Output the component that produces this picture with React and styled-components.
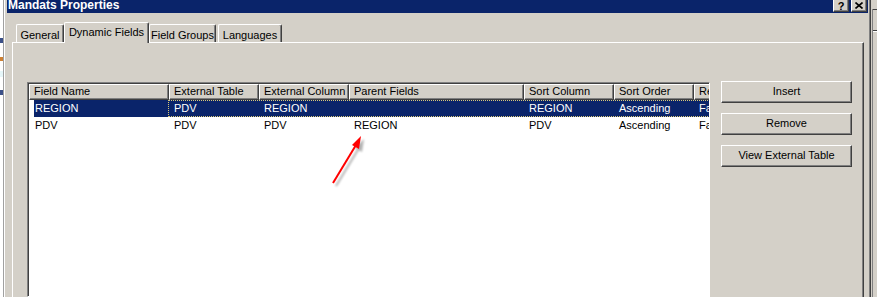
import React from 'react'
import styled, { createGlobalStyle } from 'styled-components'

const colors = {
  face: '#d4d0c8',
  shadow: '#808080',
  dark: '#404040',
  navy: '#0a246a',
  white: '#ffffff',
  focus: '#d8c878',
}

const GlobalStyle = createGlobalStyle`
  html, body {
    margin: 0;
    padding: 0;
    background: #fff;
  }
  body {
    font-family: "Liberation Sans", Arial, sans-serif;
    font-size: 11px;
    color: #000;
  }
`

const Screen = styled.div`
  position: relative;
  display: flex;
  width: 877px;
  height: 297px;
  overflow: hidden;
  background: #fff;
`

const BackWindow = styled.div`
  display: flex;
  flex-direction: column;
  width: 3px;
  border-right: 1px solid #a0a0a0;
  background: #fff;
  overflow: hidden;
`

const Fragment = styled.div`
  height: ${({ h }) => h}px;
  margin-top: ${({ top }) => top}px;
  background: ${({ color }) => color};
  opacity: 0.8;
`

const Dialog = styled.div`
  display: flex;
  flex-direction: column;
  width: 861px;
  padding: 0 2px 0 2px;
  background: ${colors.face};
  border-left: 1px solid ${colors.white};
  border-right: 1px solid ${colors.dark};
  box-shadow: inset -1px 0 ${colors.shadow};
`

const TitleBar = styled.div`
  display: flex;
  justify-content: space-between;
  align-items: flex-start;
  height: 13px;
  padding-left: 1px;
  background: ${colors.navy};
  color: ${colors.white};
`

const Title = styled.div`
  font-weight: bold;
  font-size: 12px;
  line-height: 10px;
`

const CaptionButtons = styled.div`
  display: flex;
  gap: 2px;
  margin-right: 1px;
`

const CaptionButton = styled.div`
  display: flex;
  align-items: center;
  justify-content: center;
  width: 16px;
  height: 12px;
  box-sizing: border-box;
  background: ${colors.face};
  border-left: 1px solid ${colors.white};
  border-right: 1px solid ${colors.dark};
  border-bottom: 1px solid ${colors.dark};
  box-shadow: inset -1px -1px ${colors.shadow};
  color: #000;
  font-weight: bold;
  font-size: 11px;
  line-height: 10px;
`

const Body = styled.div`
  display: flex;
  flex-direction: column;
  flex: 1;
  padding: 9px 4px 0 5px;
`

const TabRow = styled.div`
  position: relative;
  z-index: 1;
  display: flex;
  align-items: flex-end;
  height: 20px;
  padding-left: 2px;
`

const Tab = styled.div`
  width: ${({ w }) => w}px;
  height: ${({ active }) => (active ? 21 : 18)}px;
  margin-left: ${({ gap }) => gap || 0}px;
  margin-bottom: ${({ active }) => (active ? -1 : 0)}px;
  box-sizing: border-box;
  padding-top: ${({ active }) => (active ? 2 : 3)}px;
  background: ${colors.face};
  border-top: 1px solid ${colors.white};
  border-left: 1px solid ${colors.white};
  border-right: 1px solid ${colors.dark};
  border-radius: 2px 2px 0 0;
  box-shadow: inset -1px 0 ${colors.shadow};
  text-align: center;
  line-height: 15px;
  white-space: nowrap;
`

const Panel = styled.div`
  display: flex;
  flex: 1;
  padding: 38px 0 0 14px;
  background: ${colors.face};
  border-top: 1px solid ${colors.white};
  border-left: 1px solid ${colors.white};
  border-right: 1px solid ${colors.dark};
  box-shadow: inset -1px 0 ${colors.shadow};
`

const ListView = styled.div`
  width: 683px;
  box-sizing: border-box;
  margin-top: 1px;
  padding: 1px 0 0 1px;
  background: #fff;
  border: 1px solid;
  border-color: ${colors.shadow} ${colors.white} ${colors.white} ${colors.shadow};
  box-shadow: inset 1px 1px ${colors.dark};
  overflow: hidden;
`

const HeaderRow = styled.div`
  display: flex;
  height: 16px;
`

const HeaderCell = styled.div`
  flex: none;
  width: ${({ w }) => w}px;
  box-sizing: border-box;
  padding-left: 4px;
  background: ${colors.face};
  border-top: 1px solid ${colors.white};
  border-left: 1px solid ${colors.white};
  border-right: 1px solid ${colors.dark};
  border-bottom: 1px solid ${colors.dark};
  box-shadow: inset -1px -1px ${colors.shadow};
  line-height: 13px;
  white-space: nowrap;
  overflow: hidden;
`

const Row = styled.div`
  display: flex;
  height: 17px;
  color: ${({ selected }) => (selected ? colors.white : '#000')};
`

const FirstCell = styled.div`
  flex: none;
  width: 139px;
  box-sizing: border-box;
  padding-left: 5px;
  display: flex;
`

const Label = styled.div`
  flex: 1;
  padding-left: 1px;
  background: ${({ selected }) => (selected ? colors.navy : 'transparent')};
  line-height: 17px;
`

const FocusGroup = styled.div`
  display: flex;
  flex: none;
  box-sizing: border-box;
  height: 17px;
  background: ${({ selected }) => (selected ? colors.navy : 'transparent')};
  border: 1px dotted ${({ selected }) => (selected ? colors.focus : 'transparent')};
  border-right: none;
`

const Cell = styled.div`
  flex: none;
  width: ${({ w }) => w}px;
  box-sizing: border-box;
  padding-left: 5px;
  line-height: 15px;
  white-space: nowrap;
  overflow: hidden;
`

const ButtonColumn = styled.div`
  display: flex;
  flex-direction: column;
  gap: 10px;
  padding-left: 11px;
`

const PushButton = styled.div`
  width: 131px;
  height: 22px;
  box-sizing: border-box;
  background: ${colors.face};
  border-top: 1px solid ${colors.white};
  border-left: 1px solid ${colors.white};
  border-right: 1px solid ${colors.dark};
  border-bottom: 1px solid ${colors.dark};
  box-shadow: inset -1px -1px ${colors.shadow};
  text-align: center;
  line-height: 18px;
`

const RightWindow = styled.div`
  flex: 1;
  padding-left: 1px;
  background: ${colors.face};
`

const RightEdge = styled.div`
  height: 100%;
  border-left: 1px solid ${colors.shadow};
`

const EdgeLine = styled.div`
  margin-top: ${({ top }) => top}px;
  border-top: 1px solid ${colors.dark};
  border-bottom: 1px solid ${({ light }) => (light ? colors.white : 'transparent')};
`

const Annotation = styled.svg`
  position: absolute;
  left: 0;
  top: 0;
  pointer-events: none;
`

const headers = [
  ['Field Name', 140],
  ['External Table', 90],
  ['External Column', 90],
  ['Parent Fields', 175],
  ['Sort Column', 90],
  ['Sort Order', 80],
  ['Required', 100],
]

const rows = [
  { name: 'REGION', cells: ['PDV', 'REGION', '', 'REGION', 'Ascending', 'False'], selected: true },
  { name: 'PDV', cells: ['PDV', 'PDV', 'REGION', 'PDV', 'Ascending', 'False'] },
]

const cellWidths = [90, 90, 175, 90, 80, 100]

const CloseGlyph = () => (
  <svg width="8" height="7" viewBox="0 0 8 7">
    <path d="M0.5 0.5 L7.5 6.5 M7.5 0.5 L0.5 6.5" stroke="#000" strokeWidth="1.6" />
  </svg>
)

export default function App() {
  return (
    <>
      <GlobalStyle />
      <Screen>
        {/* sliver of the window behind the dialog */}
        <BackWindow>
          <Fragment top={38} h={5} color="#0a246a" />
          <Fragment top={14} h={4} color="#c06000" />
          <Fragment top={10} h={6} color="#e0f4f8" />
          <Fragment top={13} h={5} color="#0a246a" />
        </BackWindow>

        <Dialog>
          <TitleBar>
            <Title>Mandats Properties</Title>
            <CaptionButtons>
              <CaptionButton>?</CaptionButton>
              <CaptionButton><CloseGlyph /></CaptionButton>
            </CaptionButtons>
          </TitleBar>

          <Body>
            <TabRow>
              <Tab w={48} gap={2}>General</Tab>
              <Tab w={85} active>Dynamic Fields</Tab>
              <Tab w={67}>Field Groups</Tab>
              <Tab w={64} gap={2}>Languages</Tab>
            </TabRow>

            <Panel>
              <ListView>
                <HeaderRow>
                  {headers.map(([label, w]) => (
                    <HeaderCell key={label} w={w}>{label}</HeaderCell>
                  ))}
                </HeaderRow>
                {rows.map((row) => (
                  <Row key={row.name} selected={row.selected}>
                    <FirstCell>
                      <Label selected={row.selected}>{row.name}</Label>
                    </FirstCell>
                    <FocusGroup selected={row.selected}>
                      {row.cells.map((c, i) => (
                        <Cell key={i} w={cellWidths[i]}>{c}</Cell>
                      ))}
                    </FocusGroup>
                  </Row>
                ))}
              </ListView>

              <ButtonColumn>
                <PushButton>Insert</PushButton>
                <PushButton>Remove</PushButton>
                <PushButton>View External Table</PushButton>
              </ButtonColumn>
            </Panel>
          </Body>
        </Dialog>

        <RightWindow>
          <RightEdge>
            <EdgeLine top={9} />
            <EdgeLine top={19} light />
          </RightEdge>
        </RightWindow>

        <Annotation width="877" height="297">
          <defs>
            <filter id="soft" x="-20%" y="-20%" width="140%" height="140%">
              <feGaussianBlur stdDeviation="1.2" />
            </filter>
          </defs>
          <g transform="translate(3 3)" opacity="0.3" filter="url(#soft)">
            <path d="M333 183 L356 145" stroke="#000" strokeWidth="2" />
            <polygon points="361,136 352,145 359,149" fill="#000" />
          </g>
          <path d="M333 183 L356 145" stroke="#ff0000" strokeWidth="2" />
          <polygon points="361,136 352,145 359,149" fill="#ff0000" />
        </Annotation>
      </Screen>
    </>
  )
}
